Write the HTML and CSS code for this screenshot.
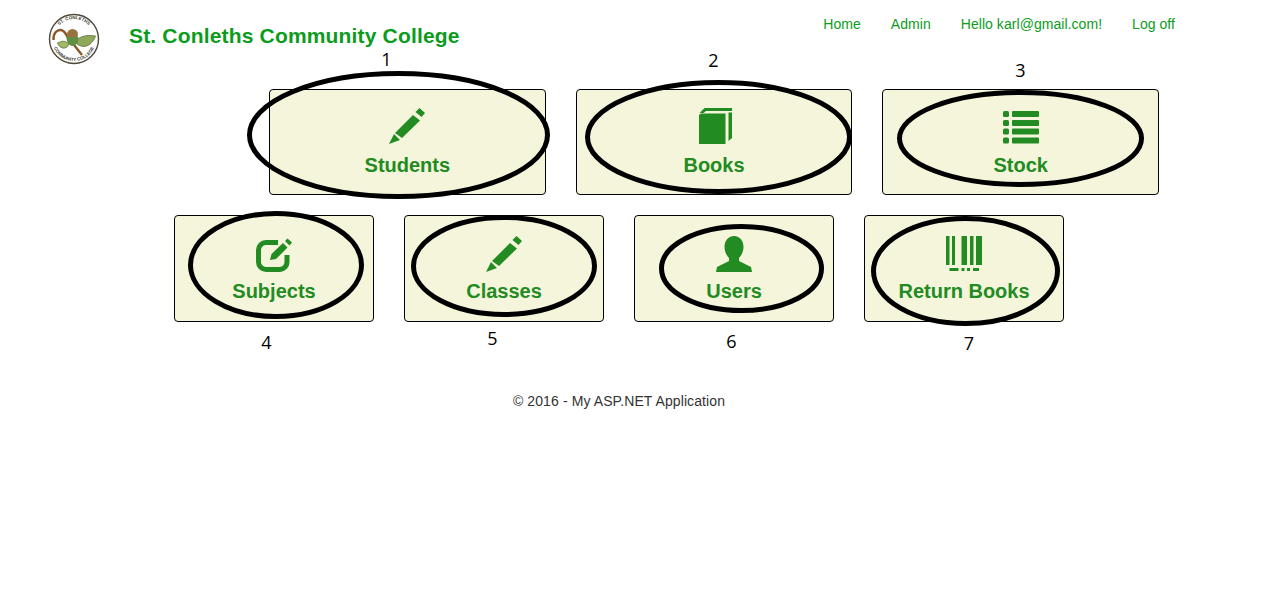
FILE: index.html
```html
<!DOCTYPE html>
<html lang="en">
	<head>
		<meta charset="UTF-8" />
		<meta name="viewport" content="width=device-width, initial-scale=1.0" />
		<title>St. Conleths Community College</title>

		<link rel="stylesheet" href="styles.css">
	</head>

	<body>
		<header class="site-header">
			<svg class="logo" viewBox="0 0 52 52" aria-hidden="true">
				<circle cx="26" cy="26" r="24.500" fill="#fff" stroke="#4f4839" stroke-width="1.400" />
				<defs>
					<path id="logo-top" d="M6 26 A20 20 0 0 1 46 26" />
					<path id="logo-bottom" d="M4 26 A22 22 0 0 0 48 26" />
				</defs>
				<text class="logo-text"><textPath href="#logo-top" startOffset="50%" text-anchor="middle">ST. CONLETHS</textPath></text>
				<text class="logo-text"><textPath href="#logo-bottom" startOffset="50%" text-anchor="middle">COMMUNITY COLLEGE</textPath></text>
				<path d="M5.500 27 C5 20 9 16.500 13 17 C16 17.500 17.500 20 19 23 L34 42" fill="none" stroke="#8b5a2b" stroke-width="2.400" />
				<path d="M29 27 C34 22 41 22 47.500 23 C45 31 37 37 29 31 Z" fill="#8fa95a" stroke="#4f6028" stroke-width="0.700" />
				<path d="M21 31 C17 27 14 28 9.500 30 C11 35 18 38 21 31 Z" fill="#a3ba6b" stroke="#4f6028" stroke-width="0.700" />
				<ellipse cx="24.500" cy="21.500" rx="5.500" ry="5.500" fill="#97743f" />
				<path d="M18.500 24 H30.500 C30.500 31 26.500 33 24.500 33 C22.500 33 18.500 31 18.500 24 Z" fill="#5f8f45" />
			</svg>
			<h1 class="site-title">St. Conleths Community College</h1>
			<nav class="site-nav">
				<a href="#">Home</a>
				<a href="#">Admin</a>
				<a href="#">Hello karl@gmail.com!</a>
				<a href="#">Log off</a>
			</nav>
		</header>

		<main>
			<div class="tile-row tile-row-top">
				<a class="tile" href="#">
					<svg class="tile-icon" viewBox="0 0 36 36" aria-hidden="true">
						<path d="M0 36 L5 26 L11 32 Z M6 25 L24 7 L31 12.5 L13 30 Z M26.500 4 L30.500 0 L36 5 L32.500 9 Z" />
					</svg>
					<span>Students</span>
				</a>
				<a class="tile" href="#">
					<svg class="tile-icon" viewBox="0 0 36 36" aria-hidden="true">
						<path d="M3 7 L5 5.500 H29.500 V36 H3 Z M3.500 5 L8.500 0 H36 V3 H10 L7.500 5 Z M32.500 4.500 H36 V30 L32.500 33 Z" />
					</svg>
					<span>Books</span>
				</a>
				<a class="tile" href="#">
					<svg class="tile-icon" viewBox="0 0 36 36" aria-hidden="true">
						<rect x="0" y="3" width="6" height="6" rx="1.500" />
						<rect x="9" y="3" width="27" height="6" rx="1" />
						<rect x="0" y="12" width="6" height="6" rx="1.500" />
						<rect x="9" y="12" width="27" height="6" rx="1" />
						<rect x="0" y="20.500" width="6" height="6" rx="1.500" />
						<rect x="9" y="20.500" width="27" height="6" rx="1" />
						<rect x="0" y="29.500" width="6" height="6" rx="1.500" />
						<rect x="9" y="29.500" width="27" height="6" rx="1" />
					</svg>
					<span>Stock</span>
				</a>
			</div>

			<div class="tile-row tile-row-bottom">
				<a class="tile" href="#">
					<svg class="tile-icon" viewBox="0 0 36 36" aria-hidden="true">
						<path class="icon-line" d="M22 6.500 H10 A7.500 7.500 0 0 0 2.500 14 V26 A7.500 7.500 0 0 0 10 33.500 H24 A7.500 7.500 0 0 0 31 26 V19" />
						<path d="M14 24 L15.500 18 L27 7 L31.500 11.500 L20 23 Z M29 5 L31.500 2.500 L36 6.500 L33.500 9.500 Z" />
					</svg>
					<span>Subjects</span>
				</a>
				<a class="tile" href="#">
					<svg class="tile-icon" viewBox="0 0 36 36" aria-hidden="true">
						<path d="M0 36 L5 26 L11 32 Z M6 25 L24 7 L31 12.5 L13 30 Z M26.500 4 L30.500 0 L36 5 L32.500 9 Z" />
					</svg>
					<span>Classes</span>
				</a>
				<a class="tile" href="#">
					<svg class="tile-icon" viewBox="0 0 36 36" aria-hidden="true">
						<path d="M18 0 C24 0 27.500 5 27.500 11 C27.500 16 25 20 23 22 V25 L35 31 L36 36 H0 L1 31 L13 25 V22 C11 20 8.500 16 8.500 11 C8.500 5 12 0 18 0 Z" />
					</svg>
					<span>Users</span>
				</a>
				<a class="tile" href="#">
					<svg class="tile-icon" viewBox="0 0 36 36" aria-hidden="true">
						<rect x="0" y="0" width="3.500" height="29" />
						<rect x="6" y="0" width="3" height="29" />
						<rect x="15.500" y="0" width="5.500" height="29" />
						<rect x="24" y="0" width="3.500" height="29" />
						<rect x="30" y="0" width="6" height="29" />
						<rect x="3.500" y="32" width="9" height="3" />
						<rect x="15.500" y="32" width="3" height="3" />
						<rect x="21" y="32" width="3" height="3" />
						<rect x="27" y="32" width="6" height="3" />
					</svg>
					<span>Return Books</span>
				</a>
			</div>
		</main>

		<footer class="site-footer">&copy; 2016 - My ASP.NET Application</footer>

		<!-- hand drawn markup on top of the page -->
		<svg class="markup" width="1264" height="593" viewBox="0 0 1264 593" aria-hidden="true">
			<ellipse cx="398.500" cy="135" rx="149" ry="61.500" />
			<ellipse cx="718.500" cy="137" rx="131" ry="54.500" />
			<ellipse cx="1020.500" cy="138.500" rx="121" ry="46" />
			<ellipse cx="276" cy="265" rx="85.500" ry="51.500" />
			<ellipse cx="504" cy="266" rx="90.500" ry="48.500" />
			<ellipse cx="741.500" cy="268.500" rx="80" ry="42" />
			<ellipse cx="965.500" cy="271" rx="92" ry="52.500" />
			<text x="386.500" y="66">1</text>
			<text x="713.500" y="67">2</text>
			<text x="1020.500" y="77">3</text>
			<text x="266.500" y="349">4</text>
			<text x="492.500" y="345">5</text>
			<text x="731.500" y="348">6</text>
			<text x="969" y="350">7</text>
		</svg>
	</body>
</html>
```

FILE: styles.css
```css
body {
	margin: 0;
	font-family: "Liberation Sans", Arial, sans-serif;
	font-size: 14px;
	color: #333;
	background: #fff;
}

a {
	text-decoration: none;
}

.site-header {
	display: flex;
	align-items: flex-start;
	box-sizing: border-box;
	height: 89px;
	padding: 13px 89px 0 48px;
}

.logo {
	width: 52px;
	height: 52px;
	flex: none;
}

.logo-text {
	font-size: 4.500px;
	font-weight: bold;
	fill: #3b362b;
}

.site-title {
	margin: 9px 0 0 29px;
	font-size: 21px;
	line-height: 28px;
	letter-spacing: 0.17px;
	color: #0c9c1c;
}

.site-nav {
	display: flex;
	gap: 30px;
	margin-left: auto;
	margin-top: 3px;
	line-height: 16px;
	letter-spacing: 0.05px;
}

.site-nav a {
	color: #0c9c1c;
}

.tile-row {
	display: flex;
	gap: 30px;
}

.tile-row-top {
	width: 890px;
	margin-left: 269px;
}

.tile-row-bottom {
	margin-left: 174px;
	margin-top: 20px;
}

.tile {
	display: flex;
	flex-direction: column;
	align-items: center;
	box-sizing: border-box;
	background: #f5f5dc;
	border: 1px solid #000;
	border-radius: 4px;
	color: #228b22;
	font-size: 20px;
	font-weight: bold;
	line-height: 24px;
}

.tile-row-top .tile {
	flex: 1;
	height: 106px;
	padding-top: 18px;
}

.tile-row-top .tile span {
	margin-top: 9px;
}

.tile-row-bottom .tile {
	width: 200px;
	height: 107px;
	padding-top: 20px;
}

.tile-row-bottom .tile span {
	margin-top: 7px;
}

.tile-icon {
	width: 36px;
	height: 36px;
	fill: #228b22;
}

.icon-line {
	fill: none;
	stroke: #228b22;
	stroke-width: 5;
}

.site-footer {
	margin-top: 71px;
	padding-right: 26px;
	text-align: center;
	line-height: 16px;
	letter-spacing: 0.1px;
}

.markup {
	position: absolute;
	top: 0;
	left: 0;
	pointer-events: none;
}

.markup ellipse {
	fill: none;
	stroke: #000;
	stroke-width: 5;
}

.markup text {
	font-family: "Open Sans", sans-serif;
	font-size: 18px;
	text-anchor: middle;
	fill: #000;
}
```
